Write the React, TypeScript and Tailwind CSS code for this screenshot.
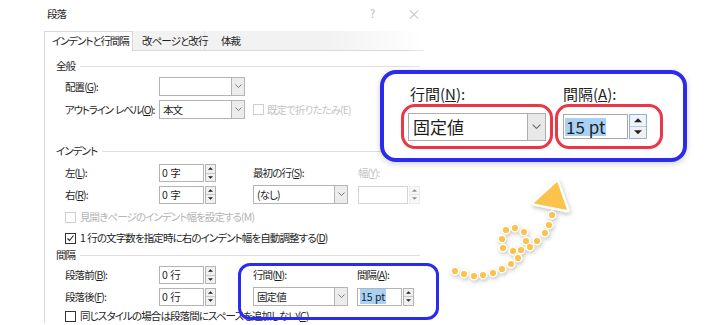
import React from "react";

const font = { fontFamily: '"Noto Sans CJK JP", "Noto Sans", sans-serif' };

const Chevron = ({ size = 7 }: { size?: number }) => (
  <svg width={size} height={size / 2 + 1} viewBox="0 0 8 5">
    <path d="M0.5 0.5 L4 4 L7.5 0.5" stroke="#6a6a6a" fill="none" strokeWidth="1" />
  </svg>
);

const Tri = ({ up, w = 5 }: { up?: boolean; w?: number }) => (
  <svg width={w} height={w / 2 + 0.5} viewBox="0 0 6 3">
    <path d={up ? "M0 3 L3 0 L6 3 Z" : "M0 0 L3 3 L6 0 Z"} fill="#222" />
  </svg>
);

const Combo = ({ w, text }: { w: number; text?: string }) => (
  <div className="flex h-[19px] border border-[#b4b4b4] bg-white" style={{ width: w }}>
    <div className="flex-1 pl-[3px] leading-[17px]">{text}</div>
    <div className="w-[13px] flex items-center justify-center border-l border-[#b4b4b4] bg-[#ececec]">
      <Chevron />
    </div>
  </div>
);

const Spin = ({ w, children, disabled }: { w: number; children?: React.ReactNode; disabled?: boolean }) => (
  <div className="flex h-[18px] gap-[1px]">
    <div
      className={
        "border bg-white pl-[2px] leading-[16px] tracking-normal " +
        (disabled ? "border-[#d4d4d4]" : "border-[#b4b4b4]")
      }
      style={{ width: w }}
    >
      {children}
    </div>
    <div className={"w-[11px] flex flex-col border " + (disabled ? "border-[#dadada] opacity-50" : "border-[#b4b4b4]")}>
      <div className="flex-1 flex items-center justify-center bg-[#f0f0f0] border-b border-[#c8c8c8]">
        <Tri up />
      </div>
      <div className="flex-1 flex items-center justify-center bg-[#f0f0f0]">
        <Tri />
      </div>
    </div>
  </div>
);

const Heading = ({ label, mt }: { label: string; mt: string }) => (
  <div className={"flex items-center h-[14px] gap-[5px] " + mt}>
    <span>{label}</span>
    <div className="flex-1 h-px bg-[#dedede]" />
  </div>
);

const Check = ({ checked, disabled }: { checked?: boolean; disabled?: boolean }) => (
  <div
    className={
      "w-[11px] h-[11px] shrink-0 border bg-white flex items-center justify-center " +
      (disabled ? "border-[#cfcfcf]" : "border-[#333]")
    }
  >
    {checked && (
      <svg width="9" height="9" viewBox="0 0 9 9">
        <path d="M1.5 4.5 L3.5 6.5 L7.5 1.5" stroke="#222" fill="none" strokeWidth="1.1" />
      </svg>
    )}
  </div>
);

const K = ({ k }: { k: string }) => <span className="underline">{k}</span>;
const Sp = () => <span className="tracking-normal"> </span>;

const dots: [number, number][] = [
  [455, 271], [464, 274], [474, 276], [483, 275], [493, 273], [502, 269], [511, 264],
  [518, 258], [521, 250], [513, 251], [503, 248], [502, 239], [506, 230], [515, 228],
  [524, 232], [526, 241], [530, 247], [537, 241], [545, 233], [549, 225], [552, 215],
];

const Arrow = () => (
  <svg className="absolute left-[440px] top-[170px]" width="140" height="120" viewBox="440 170 140 120">
    <defs>
      <filter id="sh" x="-20%" y="-20%" width="140%" height="140%">
        <feDropShadow dx="1" dy="2" stdDeviation="2" floodColor="#000" floodOpacity="0.25" />
      </filter>
    </defs>
    <g filter="url(#sh)">
      {dots.map(([x, y], i) => (
        <circle key={i} cx={x} cy={y} r="4.3" fill="#fff" />
      ))}
      <path d="M534 203 L557 182 L567 210 Z" fill="#fff" stroke="#fff" strokeWidth="5" strokeLinejoin="round" />
    </g>
    {dots.map(([x, y], i) => (
      <circle key={i} cx={x} cy={y} r="3.1" fill="#fcc34c" />
    ))}
    <path d="M535 203 L557 183 L566 209 Z" fill="#fcc34c" stroke="#fcc34c" strokeWidth="1.5" strokeLinejoin="round" />
  </svg>
);

export default function App() {
  return (
    <div
      className="relative w-[724px] h-[325px] overflow-hidden bg-white text-[10.5px] tracking-[-0.9px] text-[#1e1e1e] [font-feature-settings:'palt'] whitespace-nowrap"
      style={font}
    >
      {/* title bar */}
      <div className="flex items-center w-[420px] h-[31px] pl-[47px] pb-[4px]">
        <span>段落</span>
        <span className="ml-auto text-[#b8b8b8] text-[11px] w-[37px]">?</span>
        <span className="text-[#b8b8b8] text-[14px]">×</span>
      </div>

      {/* tabs */}
      <div className="ml-[44px] w-[380px] h-[19px] flex bg-linear-to-r from-[#f2f2f2] from-75% to-white">
        <div className="h-[20px] w-[89px] pl-[7px] bg-white border border-b-0 border-[#d9d9d9] leading-[18px] tracking-[-1.1px]">インデントと行間隔</div>
        <div className="w-[72px] pl-[9px] border-r border-[#e2e2e2] leading-[19px]">改ページと改行</div>
        <div className="pl-[16px] leading-[19px]">体裁</div>
      </div>

      {/* panel */}
      <div className="ml-[44px] w-[380px] border-l border-t border-[#d9d9d9] pl-[11px] pr-[4px]">
        <Heading label="全般" mt="mt-[8px]" />
        <div className="pl-[9px]">
          <div className="flex items-center mt-[4px] h-[19px]">
            <span className="w-[94px]">配置(<K k="G" />):</span>
            <Combo w={86} />
          </div>
          <div className="flex items-center mt-[4px] h-[19px]">
            <span className="w-[94px] tracking-[-1.2px]">
              アウトライン<Sp />レベル(<K k="O" />):
            </span>
            <Combo w={86} text="本文" />
            <div className="ml-[8px] flex items-center gap-[3px] text-[#c4c4c4]">
              <Check disabled />
              <span>既定で折りたたみ(E)</span>
            </div>
          </div>
        </div>

        <Heading label="インデント" mt="mt-[25px]" />
        <div className="pl-[9px]">
          <div className="grid grid-cols-[94px_94px_105px_auto] items-center mt-[6px] gap-y-[3px]">
            <span>左(<K k="L" />):</span>
            <Spin w={45}>0 字</Spin>
            <span>最初の行(<K k="S" />):</span>
            <span className="text-[#c4c4c4]">幅(<K k="Y" />):</span>
            <span>右(<K k="R" />):</span>
            <Spin w={45}>0 字</Spin>
            <Combo w={95} text="(なし)" />
            <Spin w={50} disabled />
          </div>
          <div className="flex items-center gap-[4px] mt-[6px] h-[14px] text-[#b4b4b4]">
            <Check disabled />
            <span>見開きページのインデント幅を設定する(M)</span>
          </div>
          <div className="flex items-center gap-[4px] mt-[7px] h-[14px]">
            <Check checked />
            <span>
              1<Sp />行の文字数を指定時に右のインデント幅を自動調整する(<K k="D" />)
            </span>
          </div>
        </div>

        <Heading label="間隔" mt="mt-[3px]" />
        <div className="pl-[9px]">
          <div className="grid grid-cols-[94px_94px_104px_auto] items-center mt-[4px] gap-y-[3px]">
            <span>段落前(<K k="B" />):</span>
            <Spin w={45}>0 行</Spin>
            <span>行間(<K k="N" />):</span>
            <span>間隔(<K k="A" />):</span>
            <span>段落後(<K k="F" />):</span>
            <Spin w={45}>0 行</Spin>
            <Combo w={95} text="固定値" />
            <Spin w={45}>
              <span className="bg-[#a9d1f5] px-[1px]">15 pt</span>
            </Spin>
          </div>
          <div className="flex items-center gap-[4px] mt-[3px] h-[14px]">
            <Check />
            <span>同じスタイルの場合は段落間にスペースを追加しない(<K k="C" />)</span>
          </div>
        </div>
      </div>

      {/* fade on right edge of dialog */}
      <div className="absolute top-0 left-[405px] w-[40px] h-[70px] bg-linear-to-r from-transparent to-white" />

      {/* small blue highlight */}
      <div className="absolute left-[238px] top-[263px] w-[201px] h-[57px] border-[3px] border-[#2b2bef] rounded-[12px]" />

      {/* big callout */}
      <div className="absolute left-[380px] top-[70px] w-[307px] h-[92px] border-[4px] border-[#2b2bef] rounded-[16px] bg-white shadow-[0_2px_6px_rgba(0,0,0,0.18)] flex gap-[2px] pl-[17px] pt-[10px] tracking-normal">
        <div className="flex flex-col">
          <div className="pl-[9px] h-[20px] text-[15px] leading-[20px]">行間(<K k="N" />):</div>
          <div className="w-[152px] h-[45px] rounded-[14px] border-[3px] border-[#ec3545] flex items-center justify-center">
            <div className="flex w-[138px] h-[28px] border border-[#adadad] bg-white">
              <div className="flex-1 pl-[4px] text-[17px] leading-[26px]">固定値</div>
              <div className="w-[18px] flex items-center justify-center border-l border-[#adadad] bg-[#e8e8e8]">
                <Chevron size={9} />
              </div>
            </div>
          </div>
        </div>
        <div className="flex flex-col">
          <div className="pl-[8px] h-[20px] text-[15px] leading-[20px]">間隔(<K k="A" />):</div>
          <div className="w-[108px] h-[45px] rounded-[14px] border-[3px] border-[#ec3545] flex items-center pl-[5px]">
            <div className="flex h-[25px] gap-[1px]">
              <div className="w-[65px] border border-[#a8a8a8] bg-white flex items-center pl-[1px]">
                <span className="bg-[#a9d1f5] text-[17px] leading-[18px] px-[1px]">15 pt</span>
              </div>
              <div className="w-[18px] flex flex-col border border-[#8fb3dc]">
                <div className="flex-1 flex items-center justify-center bg-[#eef4fb] border-b border-[#b7cbe3]">
                  <Tri up w={8} />
                </div>
                <div className="flex-1 flex items-center justify-center bg-[#f0f0f0]">
                  <Tri w={8} />
                </div>
              </div>
            </div>
          </div>
        </div>
      </div>

      <Arrow />
    </div>
  );
}
